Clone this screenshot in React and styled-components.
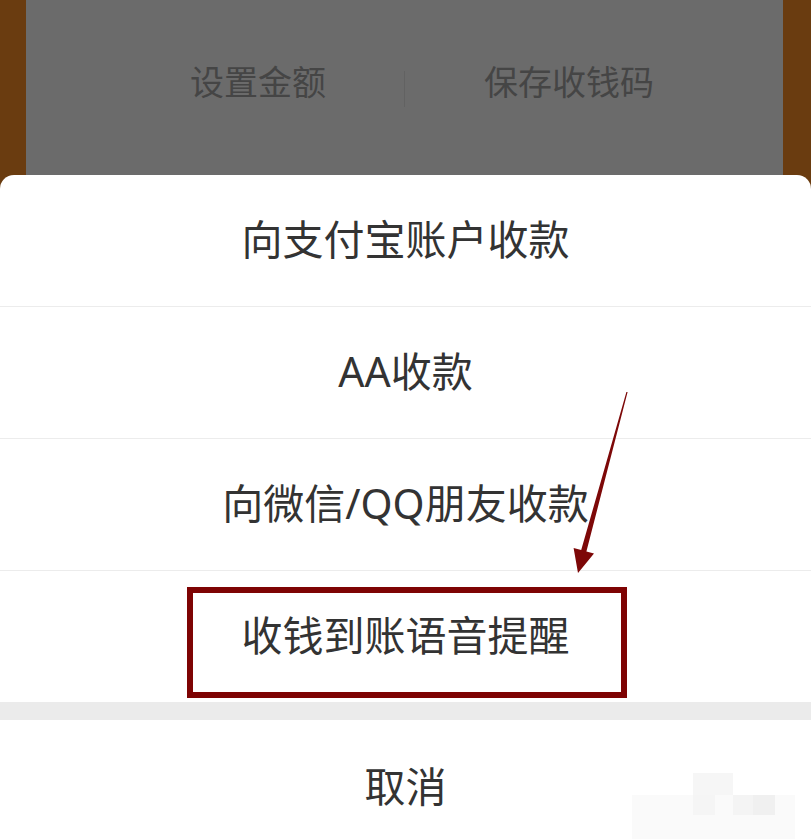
import React from 'react';
import styled, { createGlobalStyle } from 'styled-components';

const GlobalStyle = createGlobalStyle`
  html, body {
    margin: 0;
    padding: 0;
    background: #ffffff;
  }
  body {
    font-family: "Noto Sans", "Noto Sans CJK SC", sans-serif;
  }
`;

const Page = styled.div`
  position: relative;
  width: 811px;
  height: 839px;
  overflow: hidden;
  background: #ffffff;
`;

const Backdrop = styled.div`
  height: 200px;
  background: #6a3c10;
  padding: 0 28px 0 26px;
  box-sizing: border-box;
`;

const Panel = styled.div`
  height: 100%;
  background: #6b6b6b;
  display: grid;
  grid-template-columns: 1fr 1px 1fr;
  align-items: start;
  padding-top: 62px;
  box-sizing: border-box;
`;

const PanelButton = styled.div`
  font-size: 34px;
  line-height: 40px;
  color: #454545;
  display: flex;
  justify-content: ${({ side }) => (side === 'left' ? 'flex-end' : 'flex-start')};
  ${({ side }) => (side === 'left' ? 'padding-right: 78px;' : 'padding-left: 79px;')}
`;

const PanelDivider = styled.div`
  width: 1px;
  height: 36px;
  margin-top: 9px;
  background: #626262;
`;

const Sheet = styled.div`
  position: relative;
  z-index: 1;
  margin-top: -25px;
  background: #ffffff;
  border-radius: 14px 14px 0 0;
`;

const Option = styled.div`
  position: relative;
  height: 130px;
  padding-bottom: 1px;
  display: flex;
  align-items: center;
  justify-content: center;
  font-size: 41px;
  line-height: 1.3;
  color: #333333;
  border-bottom: ${({ last }) => (last ? 'none' : '1px solid #ececec')};
`;

const Gap = styled.div`
  height: 18px;
  background: #ebebeb;
`;

const Cancel = styled(Option)`
  height: 134px;
  padding-bottom: 0;
  border-bottom: none;
`;

const Highlight = styled.div`
  position: absolute;
  left: 187px;
  top: 16px;
  width: 440px;
  height: 111px;
  border: 6px solid #7e0303;
  box-sizing: border-box;
  pointer-events: none;
`;

const Overlay = styled.svg`
  position: absolute;
  left: 0;
  top: 0;
  z-index: 2;
  pointer-events: none;
`;

const options = ['向支付宝账户收款', 'AA收款', '向微信/QQ朋友收款'];

export default function App() {
  return (
    <Page>
      <GlobalStyle />
      <Backdrop>
        <Panel>
          <PanelButton side="left">设置金额</PanelButton>
          <PanelDivider />
          <PanelButton side="right">保存收钱码</PanelButton>
        </Panel>
      </Backdrop>
      <Sheet>
        {options.map((text) => (
          <Option key={text}>{text}</Option>
        ))}
        <Option last>
          收钱到账语音提醒
          <Highlight />
        </Option>
        <Gap />
        <Cancel>取消</Cancel>
      </Sheet>
      <Overlay width="811" height="839" viewBox="0 0 811 839">
        {/* annotation arrow */}
        <polygon
          points="627.6,392 586.4,551.5 594,553.6 578,573 573.6,548 581.2,550.1 626.4,392"
          fill="#7d0808"
        />
        {/* mosaic watermark */}
        <g>
          <rect x="693" y="773" width="40" height="22" fill="#f6f6f6" />
          <rect x="632" y="795" width="163" height="44" fill="#fafafa" />
          <rect x="693" y="795" width="22" height="20" fill="#f5f5f5" />
          <rect x="733" y="795" width="42" height="20" fill="#f4f4f4" />
          <rect x="753" y="795" width="22" height="20" fill="#f0f0f0" />
        </g>
      </Overlay>
    </Page>
  );
}
